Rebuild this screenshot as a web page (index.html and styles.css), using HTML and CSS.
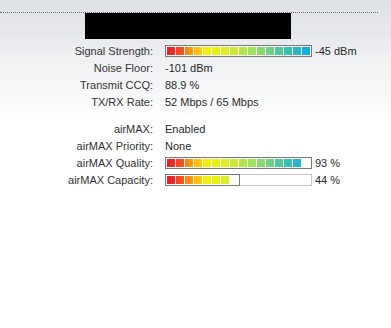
FILE: index.html
```html
<!DOCTYPE html>
<html>
<head>
<meta charset="utf-8">
<link rel="stylesheet" href="styles.css">
</head>
<body>
<div class="panel">
  <div class="title-block"></div>
  <div class="rows">
    <div class="row"><span class="label">Signal Strength:</span><span class="value">
      <span class="bar full"><span class="seg"></span><span class="seg"></span><span class="seg"></span><span class="seg"></span><span class="seg"></span><span class="seg"></span><span class="seg"></span><span class="seg"></span><span class="seg"></span><span class="seg"></span><span class="seg"></span><span class="seg"></span><span class="seg"></span><span class="seg"></span><span class="seg"></span><span class="seg"></span></span>
      <span class="num">-45 dBm</span></span></div>
    <div class="row"><span class="label">Noise Floor:</span><span class="value">-101 dBm</span></div>
    <div class="row"><span class="label">Transmit CCQ:</span><span class="value">88.9 %</span></div>
    <div class="row"><span class="label">TX/RX Rate:</span><span class="value">52 Mbps / 65 Mbps</span></div>
    <div class="spacer"></div>
    <div class="row"><span class="label">airMAX:</span><span class="value">Enabled</span></div>
    <div class="row"><span class="label">airMAX Priority:</span><span class="value">None</span></div>
    <div class="row"><span class="label">airMAX Quality:</span><span class="value">
      <span class="bar full"><span class="seg"></span><span class="seg"></span><span class="seg"></span><span class="seg"></span><span class="seg"></span><span class="seg"></span><span class="seg"></span><span class="seg"></span><span class="seg"></span><span class="seg"></span><span class="seg"></span><span class="seg"></span><span class="seg"></span><span class="seg"></span><span class="seg"></span></span>
      <span class="num">93 %</span></span></div>
    <div class="row"><span class="label">airMAX Capacity:</span><span class="value">
      <span class="bar track"><span class="fillbox" style="width:75px"><span class="seg"></span><span class="seg"></span><span class="seg"></span><span class="seg"></span><span class="seg"></span><span class="seg"></span><span class="seg"></span></span></span>
      <span class="num">44 %</span></span></div>
  </div>
</div>
</body>
</html>
```
FILE: styles.css
```css
html, body {
  margin: 0;
  padding: 0;
}
body {
  width: 391px;
  height: 328px;
  background: linear-gradient(#dde0e5 0, #eef0f2 60px, #ffffff 120px);
  font-family: "Liberation Sans", Arial, sans-serif;
  font-size: 11px;
  color: #333;
  overflow: hidden;
}
.panel {
  margin-top: 12px;
  width: 378px;
  border-top: 1px dotted #666;
}
.title-block {
  margin-left: 85px;
  width: 206px;
  height: 26px;
  background: #000;
}
.rows {
  padding-top: 3px;
}
.row {
  display: grid;
  grid-template-columns: 153px 1fr;
  column-gap: 12px;
  height: 17px;
  align-items: center;
}
.label {
  text-align: right;
  white-space: nowrap;
}
.value {
  display: flex;
  align-items: center;
  white-space: nowrap;
  color: #2a2a2a;
}
.spacer {
  height: 10px;
}
.bar {
  box-sizing: border-box;
  width: 147px;
  height: 12px;
  background: #fff;
  display: flex;
}
.bar.full {
  border: 1px solid #7a7a7a;
  padding: 1px;
  gap: 1px;
}
.bar.track {
  border: 1px solid #c8c8c8;
}
.fillbox {
  box-sizing: border-box;
  margin: -1px;
  height: 12px;
  border: 1px solid #7a7a7a;
  padding: 1px;
  display: flex;
  gap: 1px;
}
.seg {
  width: 8px;
  height: 8px;
  flex: none;
}
.seg:nth-child(1) { background: linear-gradient(90deg, #f01a28, #f22a22); }
.seg:nth-child(2) { background: linear-gradient(90deg, #f7401c, #f9561a); }
.seg:nth-child(3) { background: linear-gradient(90deg, #fa8210, #fb9a0e); }
.seg:nth-child(4) { background: linear-gradient(90deg, #fcbb08, #fcd006); }
.seg:nth-child(5) { background: #f8ee02; }
.seg:nth-child(6) { background: #ecf00e; }
.seg:nth-child(7) { background: #dbef1e; }
.seg:nth-child(8) { background: #c8ec30; }
.seg:nth-child(9) { background: #b1e646; }
.seg:nth-child(10) { background: #9ce25a; }
.seg:nth-child(11) { background: #86da70; }
.seg:nth-child(12) { background: #6cd284; }
.seg:nth-child(13) { background: #4fc99a; }
.seg:nth-child(14) { background: #37c0b0; }
.seg:nth-child(15) { background: #22b8c8; }
.seg:nth-child(16) { background: #0eb0e2; }
.num {
  margin-left: 3px;
}
```
